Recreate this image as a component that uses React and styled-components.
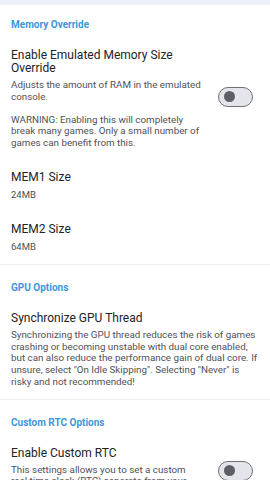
import React, { useState } from 'react';
import styled, { createGlobalStyle } from 'styled-components';

const GlobalStyle = createGlobalStyle`
  html, body {
    margin: 0;
    padding: 0;
    background: #ffffff;
    font-family: Roboto, "Noto Sans", sans-serif;
    -webkit-font-smoothing: antialiased;
  }
`;

const Page = styled.div`
  width: 270px;
  height: 480px;
  overflow: hidden;
  background: #ffffff;
`;

const TopBar = styled.div`
  height: 5px;
  background: #edf0f6;
`;

const Section = styled.section`
  padding-top: ${props => props.first ? '13px' : '16px'};
  border-top: ${props => props.first ? 'none' : '1px solid #eceef1'};
`;

const SectionHeader = styled.h2`
  margin: 0;
  padding: 0 11px 6px;
  font-size: 10px;
  line-height: 14px;
  font-weight: 700;
  color: #3c97dc;
`;

const Item = styled.div`
  display: flex;
  align-items: center;
  padding: 11px 0 11px 11px;
`;

const TextCol = styled.div`
  flex: 1;
  min-width: 0;
  padding-right: ${props => props.withToggle ? '15px' : '10px'};
`;

const Title = styled.div`
  font-size: 12px;
  line-height: 13px;
  color: #222326;
`;

const Summary = styled.p`
  margin: ${props => props.gap || '4px'} 0 0;
  font-size: 9.8px;
  line-height: 11.75px;
  color: #4f5156;
`;

const Value = styled.div`
  margin-top: 5px;
  font-size: 9.5px;
  line-height: 12px;
  color: #4f5156;
`;

const ToggleTrack = styled.button`
  flex: none;
  width: 35px;
  height: 20px;
  margin: 0 17px 4px 0;
  padding: 0 0 0 5px;
  display: flex;
  align-items: center;
  justify-content: ${props => props.on ? 'flex-end' : 'flex-start'};
  box-sizing: border-box;
  border: 1.5px solid #6f7075;
  border-radius: 10px;
  background: #e3e5eb;
  cursor: pointer;
`;

const Knob = styled.span`
  width: 11px;
  height: 11px;
  border-radius: 50%;
  background: #5d5f66;
`;

const Toggle = ({ on, onClick }) => (
  <ToggleTrack on={on ? 1 : 0} onClick={onClick}>
    <Knob />
  </ToggleTrack>
);

const App = () => {
  const [memOverride, setMemOverride] = useState(false);
  const [customRtc, setCustomRtc] = useState(false);

  return (
    <Page>
      <GlobalStyle />
      <TopBar />

      <Section first>
        <SectionHeader>Memory Override</SectionHeader>
        <Item>
          <TextCol withToggle>
            <Title>Enable Emulated Memory Size Override</Title>
            <Summary>Adjusts the amount of RAM in the emulated console.</Summary>
            <Summary gap="11px">
              WARNING: Enabling this will completely break many games. Only a small number of games can benefit from this.
            </Summary>
          </TextCol>
          <Toggle on={memOverride} onClick={() => setMemOverride(!memOverride)} />
        </Item>
        <Item>
          <TextCol>
            <Title>MEM1 Size</Title>
            <Value>24MB</Value>
          </TextCol>
        </Item>
        <Item>
          <TextCol>
            <Title>MEM2 Size</Title>
            <Value>64MB</Value>
          </TextCol>
        </Item>
      </Section>

      <Section>
        <SectionHeader>GPU Options</SectionHeader>
        <Item>
          <TextCol>
            <Title>Synchronize GPU Thread</Title>
            <Summary>
              Synchronizing the GPU thread reduces the risk of games crashing or becoming unstable with dual core enabled, but can also reduce the performance gain of dual core. If unsure, select "On Idle Skipping". Selecting "Never" is risky and not recommended!
            </Summary>
          </TextCol>
        </Item>
      </Section>

      <Section>
        <SectionHeader>Custom RTC Options</SectionHeader>
        <Item>
          <TextCol withToggle>
            <Title>Enable Custom RTC</Title>
            <Summary>
              This settings allows you to set a custom real time clock (RTC) separate from your current system time.
            </Summary>
          </TextCol>
          <Toggle on={customRtc} onClick={() => setCustomRtc(!customRtc)} />
        </Item>
      </Section>
    </Page>
  );
};

export default App;
